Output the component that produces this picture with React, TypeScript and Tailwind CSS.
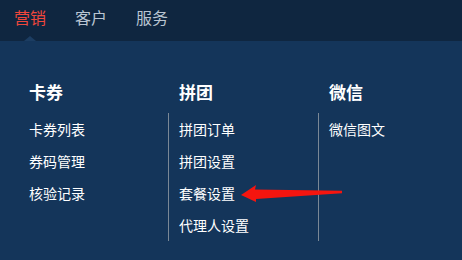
import React from "react"

const columns = [
  { title: "卡券", items: ["卡券列表", "券码管理", "核验记录"], first: true },
  { title: "拼团", items: ["拼团订单", "拼团设置", "套餐设置", "代理人设置"] },
  { title: "微信", items: ["微信图文"] },
]

const font = { fontFamily: '"Noto Sans CJK SC", "Noto Sans", sans-serif' }

export default function App() {
  return (
    <div className="relative h-[260px] w-full overflow-hidden bg-[#14355a]" style={font}>
      {/* top nav */}
      <header className="relative flex h-[41px] items-center gap-[29px] bg-[#0f2640] pb-[8px] pl-[14px] text-[16px]">
        <span className="text-[#f0473c]">营销</span>
        <span className="text-[#b9c5d2]">客户</span>
        <span className="text-[#b9c5d2]">服务</span>
        <span className="absolute bottom-0 left-[24px] h-0 w-0 border-x-[6px] border-b-[5px] border-x-transparent border-b-[#1c3d62]" />
      </header>

      {/* mega menu */}
      <div className="flex pl-[29px] pt-[42px]">
        {columns.map((col) => (
          <div
            key={col.title}
            className={`flex shrink-0 flex-col ${col.first ? "w-[139px]" : "w-[150px]"}`}
          >
            <h3
              className={`h-[30px] text-[17px] font-bold leading-none text-white ${col.first ? "" : "pl-[11px]"}`}
            >
              {col.title}
            </h3>
            <ul className={`flex-1 ${col.first ? "" : "border-l border-[#7a8896] pl-[10px]"}`}>
              {col.items.map((item) => (
                <li key={item} className="flex h-[32px] items-center text-[14px] text-white">
                  {item}
                </li>
              ))}
            </ul>
          </div>
        ))}
      </div>

      {/* red pointer arrow */}
      <svg className="absolute left-0 top-0" width="462" height="260" viewBox="0 0 462 260">
        <polygon
          points="241,195 256,185 255,189.5 342,190.8 342,193.2 256,199 256,202"
          fill="#f5150f"
        />
      </svg>
    </div>
  )
}
